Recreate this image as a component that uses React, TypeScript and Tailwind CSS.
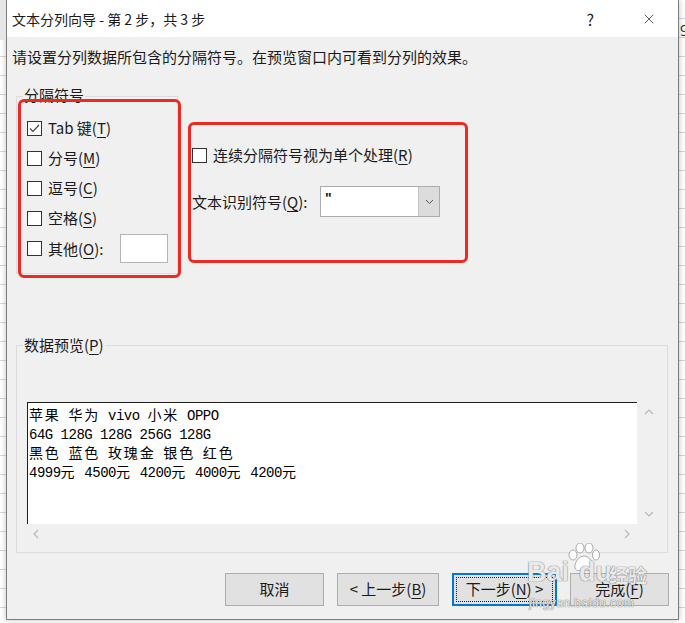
import React from 'react';
import { X } from 'lucide-react';

const font = "font-['Microsoft_YaHei_UI','Noto_Sans_CJK_SC',sans-serif]";

const Check: React.FC<{ checked?: boolean }> = ({ checked }) => (
  <span className="w-[15px] h-[15px] border border-[#333333] bg-white flex items-center justify-center shrink-0">
    {checked && (
      <svg width="11" height="9" viewBox="0 0 11 9">
        <polyline points="1,4.5 4,7.5 10,1" fill="none" stroke="#444444" strokeWidth="1.2" />
      </svg>
    )}
  </span>
);

const Key: React.FC<{ k: string }> = ({ k }) => (
  <>
    (<span className="underline underline-offset-[3px] decoration-1">{k}</span>)
  </>
);

const Chevron: React.FC<{ dir: 'up' | 'down' | 'left' | 'right' }> = ({ dir }) => {
  const pts = {
    up: '1,6 5,2 9,6',
    down: '1,2 5,6 9,2',
    left: '6,1 2,5 6,9',
    right: '2,1 6,5 2,9',
  }[dir];
  const vertical = dir === 'up' || dir === 'down';
  return (
    <svg width={vertical ? 10 : 8} height={vertical ? 8 : 10} viewBox={vertical ? '0 0 10 8' : '0 0 8 10'}>
      <polyline points={pts} fill="none" stroke="#b8b8b8" strokeWidth="1.2" />
    </svg>
  );
};

const Paw: React.FC = () => (
  <svg width="32" height="30" viewBox="0 0 32 30">
    <g fill="#ffffff" fillOpacity="0.85" stroke="#8a8a8a" strokeOpacity="0.7" strokeWidth="1">
      <ellipse cx="5" cy="12" rx="4" ry="5" />
      <ellipse cx="12" cy="5" rx="4" ry="5" />
      <ellipse cx="21" cy="5" rx="4" ry="5" />
      <ellipse cx="28" cy="12" rx="3.5" ry="5" />
      <path d="M16 13 C10 13 6 21 7 25 C8 29 13 27 16 27 C19 27 24 29 25 25 C26 21 22 13 16 13 Z" />
    </g>
  </svg>
);

const options = [
  { label: 'Tab 键', k: 'T', checked: true },
  { label: '分号', k: 'M' },
  { label: '逗号', k: 'C' },
  { label: '空格', k: 'S' },
];

const preview = [
  '苹果 华为 vivo 小米 OPPO',
  '64G 128G 128G 256G 128G',
  '黑色 蓝色 玫瑰金 银色 红色',
  '4999元 4500元 4200元 4000元 4200元',
];

// CJK glyphs are full width and Latin half width in the preview font
const PreviewLine: React.FC<{ text: string }> = ({ text }) => (
  <div className="whitespace-pre h-[19px]">
    {text.split(/([\u4e00-\u9fff]+)/).map((seg, i) =>
      /[\u4e00-\u9fff]/.test(seg) ? (
        <span key={i} className="font-['Noto_Sans_CJK_SC',sans-serif] text-[14px] tracking-[1.8px]">
          {seg}
        </span>
      ) : (
        <span key={i} className="font-['Liberation_Mono',monospace] text-[14px] tracking-[-0.5px]">
          {seg}
        </span>
      )
    )}
  </div>
);

const mark = '[text-shadow:0_0_1px_#6f6f6f,0_0_1px_#6f6f6f]';

export default function App() {
  return (
    <div
      className={`relative w-[685px] h-[623px] overflow-hidden bg-white bg-[repeating-linear-gradient(to_bottom,transparent_0,transparent_18px,#d4d4d4_18px,#d4d4d4_19px)] ${font} text-[#1a1a1a]`}
    >
      {/* spreadsheet peeking out behind the dialog */}
      <div className="absolute left-0 top-0 w-[6px] h-[40px] bg-[#e6e6e6]" />
      <span className="absolute left-[680px] top-[20px] text-[15px] leading-[20px] text-[#333]">9</span>

      {/* dialog */}
      <div className="ml-[6px] w-[673px] h-[620px] border-x border-b border-[#7d7d7d] bg-[#f0f0f0] flex flex-col shadow-[0_0_6px_rgba(0,0,0,0.25)]">
        {/* title bar */}
        <div className="h-[37px] bg-white flex items-center pl-[5px] shrink-0">
          <span className="text-[14px] leading-[20px]">文本分列向导 - 第 2 步，共 3 步</span>
          <span className="ml-auto text-[16px] leading-[20px] text-[#222] mr-[47px]">?</span>
          <X className="w-[16px] h-[16px] mr-[21px] text-[#222]" strokeWidth={1.1} />
        </div>

        {/* instruction */}
        <div className="mt-[10px] pl-[5px] text-[15px] leading-[20px]">
          请设置分列数据所包含的分隔符号。在预览窗口内可看到分列的效果。
        </div>

        {/* delimiters + options */}
        <div className="mt-[29px] h-[178px] flex">
          <div className="relative ml-[9px] w-[162px] h-[178px] border border-[#dcdcdc]">
            <span className="absolute left-[6px] -top-[12px] px-[1px] bg-[#f0f0f0] text-[15px] leading-[20px]">
              分隔符号
            </span>
            <div className="pt-[16px] pl-[10px] flex flex-col text-[15px]">
              {options.map((o) => (
                <div key={o.k} className="h-[30px] flex items-center gap-[6px]">
                  <Check checked={o.checked} />
                  <span className="leading-[20px]">
                    {o.label}
                    <Key k={o.k} />
                  </span>
                </div>
              ))}
              <div className="h-[31px] flex items-center gap-[6px]">
                <Check />
                <span className="leading-[20px] w-[66px]">
                  其他
                  <Key k="O" />:
                </span>
                <span className="w-[48px] h-[29px] bg-white border border-[#b4b4b4]" />
              </div>
            </div>
          </div>

          <div className="ml-[14px] flex flex-col text-[15px]">
            <div className="mt-[44px] h-[30px] flex items-center gap-[6px]">
              <Check />
              <span className="leading-[20px]">
                连续分隔符号视为单个处理
                <Key k="R" />
              </span>
            </div>
            <div className="mt-[16px] h-[31px] flex items-center">
              <span className="w-[128px] leading-[20px]">
                文本识别符号
                <Key k="Q" />:
              </span>
              <div className="w-[120px] h-[31px] flex border border-[#acacac] bg-white">
                <span className="flex-1 pl-[4px] text-[14px] leading-[22px] font-['Liberation_Sans',sans-serif] font-bold">"</span>
                <span className="w-[21px] bg-[#dcdcdc] border-l border-[#c4c4c4] flex items-center justify-center">
                  <svg width="9" height="6" viewBox="0 0 9 6">
                    <polyline points="1,1 4.5,4.5 8,1" fill="none" stroke="#555" strokeWidth="1" />
                  </svg>
                </span>
              </div>
            </div>
          </div>
        </div>

        {/* data preview */}
        <div className="relative mt-[71px] ml-[9px] w-[652px] h-[208px] border border-[#dcdcdc]">
          <span className="absolute left-[6px] -top-[11px] px-[1px] bg-[#f0f0f0] text-[15px] leading-[20px]">
            数据预览
            <Key k="P" />
          </span>
          <div className="mt-[56px] ml-[10px] w-[633px] h-[142px] grid grid-cols-[1fr_23px] grid-rows-[1fr_20px]">
            <div className="bg-white border-l border-t border-[#1e1e1e] pl-[1px] pt-[1px] leading-[19px] text-black">
              {preview.map((line) => (
                <PreviewLine key={line} text={line} />
              ))}
            </div>
            <div className="flex flex-col items-center justify-between py-[6px]">
              <Chevron dir="up" />
              <Chevron dir="down" />
            </div>
            <div className="flex items-center justify-between pl-[5px] pr-[6px]">
              <Chevron dir="left" />
              <Chevron dir="right" />
            </div>
            <div />
          </div>
        </div>

        {/* buttons */}
        <div className="mt-[20px] flex justify-end gap-[13px] pr-[9px] text-[15px]">
          <button className="w-[99px] h-[33px] bg-[#e1e1e1] border border-[#adadad]">取消</button>
          <button className="w-[102px] h-[33px] bg-[#e1e1e1] border border-[#adadad]">
            &lt; 上一步
            <Key k="B" />
          </button>
          <button className="w-[105px] h-[33px] bg-[#e1e1e1] border-2 border-[#0078d7] p-[2px]">
            <span className="w-full h-full flex items-center justify-center border border-dotted border-[#222]">
              下一步
              <Key k="N" /> &gt;
            </span>
          </button>
          <button className="w-[99px] h-[33px] bg-[#e1e1e1] border border-[#adadad]">
            完成
            <Key k="F" />
          </button>
        </div>
      </div>

      {/* red annotation boxes */}
      <div className="absolute left-[18px] top-[99px] w-[163px] h-[179px] border-[3px] border-[#ec2a22] rounded-[6px]" />
      <div className="absolute left-[188px] top-[122px] w-[280px] h-[141px] border-[3px] border-[#ec2a22] rounded-[6px]" />

      {/* baidu watermark */}
      <div className="absolute left-[527px] top-[543px] w-[130px] h-[70px] pointer-events-none">
        <div className="absolute left-[41px] top-0">
          <Paw />
        </div>
        <span className={`absolute left-0 top-[14px] text-[27px] leading-[30px] font-bold font-['Liberation_Sans',sans-serif] text-white/85 ${mark}`}>
          Bai
        </span>
        <span className={`absolute left-[52px] top-[14px] text-[27px] leading-[30px] font-bold font-['Liberation_Sans',sans-serif] text-white/85 ${mark}`}>
          du
        </span>
        <span className={`absolute left-[82px] top-[20px] text-[19px] leading-[24px] font-bold text-white/85 ${mark}`}>
          经验
        </span>
        <span className={`absolute left-[2px] top-[53px] text-[12px] leading-[14px] font-['Liberation_Sans',sans-serif] text-white/85 tracking-[0.5px] ${mark}`}>
          jingyan.baidu.com
        </span>
      </div>
    </div>
  );
}
